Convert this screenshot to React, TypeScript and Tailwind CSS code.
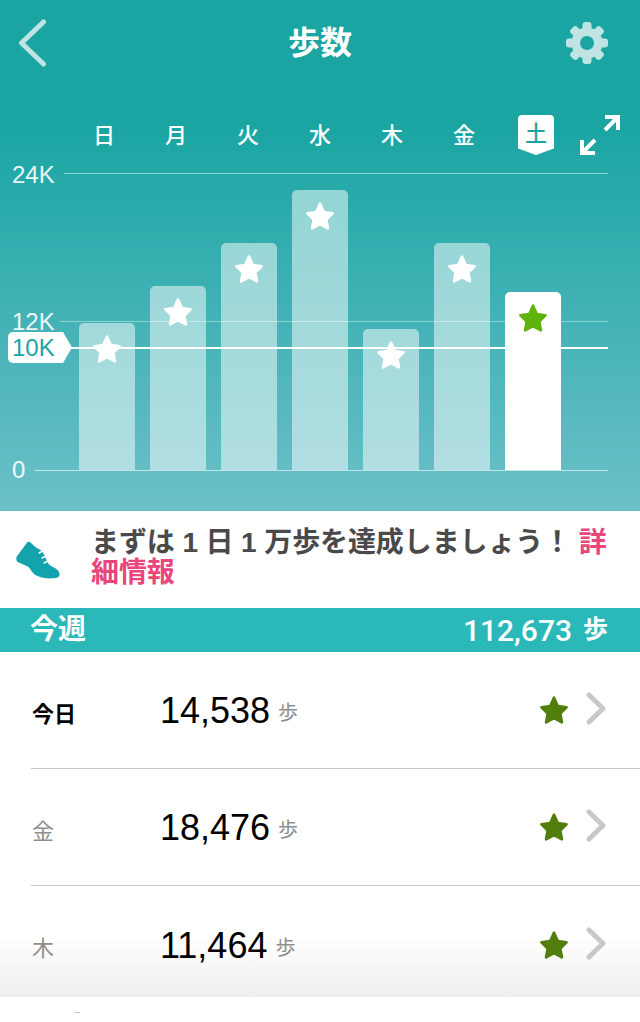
const FONT = "font-['Liberation_Sans','Noto_Sans_CJK_JP',sans-serif]";

const days = ['日', '月', '火', '水', '木', '金'];
const bars = [147, 184, 227, 280, 141, 227, 178];
const rows = [
  { day: '今日', steps: '14,538', today: true },
  { day: '金', steps: '18,476' },
  { day: '木', steps: '11,464' },
];

function Star({ size, color }: { size: number; color: string }) {
  return (
    <svg width={size} height={size} viewBox="0 0 24 24" fill={color} stroke={color} strokeWidth="2.200" strokeLinejoin="round">
      <polygon points="12,2.200 15,8.800 22,9.800 17,14.800 18.300,21.800 12,18.400 5.700,21.800 7,14.800 2,9.800 9,8.800" />
    </svg>
  );
}

function Gear() {
  return (
    <svg width="42" height="42" viewBox="0 0 42 42">
      <g fill="#c0e4e3">
        <circle cx="21" cy="21" r="15.500" />
        {[0, 45, 90, 135, 180, 225, 270, 315].map((a) => (
          <rect key={a} x="16.500" y="0" width="9" height="10" rx="3" transform={`rotate(${a} 21 21)`} />
        ))}
      </g>
      <circle cx="21" cy="21" r="7" fill="#1aa5a3" />
    </svg>
  );
}

function Shoe() {
  return (
    <svg width="44" height="39" viewBox="0 0 44 39" fill="#12a3ad">
      <path d="M0.500 16C4 11 8 6 11 1.500c1-1 2.500-1 4 .5 3 3 7 6 11 8l3 5c1 4 3 8 6 10 4 2 8 4 8.500 7.500.3 3-1 4-4 4.500-6 .8-13 .5-18-2-5-2-6-6-9-9-3-2-7-3-11-5-1-1-1.500-3-1-5z" />
      <g stroke="#fff" strokeWidth="1.500" strokeLinecap="round">
        <path d="M27 10l-4 2" />
        <path d="M30 15l-4 2" />
        <path d="M32 20l-4 2" />
      </g>
    </svg>
  );
}

export default function App() {
  return (
    <div className={`${FONT} relative h-[1022px] w-[640px] overflow-hidden bg-white`}>
      {/* Top chart panel */}
      <div className="h-[511px] bg-[linear-gradient(to_bottom,#1aa5a3_0%,#1aa5a3_25%,#6cc0c9_100%)]">
        <div className="flex h-[86px] items-center justify-between px-[18px]">
          <div className="w-[200px]">
            <svg width="30" height="48" viewBox="0 0 30 48" fill="none" stroke="#c0e4e3" strokeWidth="5" strokeLinecap="round" strokeLinejoin="round">
              <path d="M25.500 3L3.500 24l22 21" />
            </svg>
          </div>
          <h1 className="text-[32px] font-bold leading-none text-white">歩数</h1>
          <div className="flex w-[200px] justify-end pr-[14px]">
            <Gear />
          </div>
        </div>

        <div className="mt-[26px] flex h-[46px] items-center pl-[68px]">
          {days.map((d) => (
            <span key={d} className="w-[72px] text-center text-[22px] font-medium text-white">
              {d}
            </span>
          ))}
          <div className="ml-[18px] flex h-[40px] w-[36px] items-center justify-center rounded-t-[4px] bg-white pb-[3px] text-[22px] font-medium text-[#1aa5a3] [clip-path:polygon(0_0,100%_0,100%_84%,50%_100%,0_84%)]">
            土
          </div>
          <svg className="ml-[26px]" width="40" height="40" viewBox="0 0 40 40" fill="none" stroke="#fff" strokeWidth="4">
            <path d="M25 2h13v13M37 3L25 15" />
            <path d="M2 25v13h13M3 37l12-12" />
          </svg>
        </div>

        <div className="relative h-[353px]">
          {/* Grid lines and axis labels */}
          <div className="absolute left-[64px] top-[15px] h-px w-[544px] bg-white/50" />
          <div className="absolute left-[60px] top-[163px] h-px w-[548px] bg-white/40" />
          <div className="absolute left-[34px] top-[312px] h-px w-[574px] bg-white/60" />
          <span className="absolute left-[12px] top-[4px] text-[24px] leading-[26px] text-white/90">24K</span>
          <span className="absolute left-[12px] top-[151px] text-[24px] leading-[26px] text-white/90">12K</span>
          <span className="absolute left-[12px] top-[299px] text-[24px] leading-[26px] text-white/90">0</span>

          {/* Bars */}
          <div className="absolute bottom-[41px] left-[79px] flex items-end gap-[15px]">
            {bars.map((h, i) => (
              <div
                key={i}
                className={`flex w-[56px] justify-center rounded-t-[5px] ${i === 6 ? 'bg-white' : 'bg-white/50'}`}
                style={{ height: h }}
              >
                <div className="mt-[11px]">
                  <Star size={30} color={i === 6 ? '#5fb30c' : '#fff'} />
                </div>
              </div>
            ))}
          </div>

          {/* 10K goal line */}
          <div className="absolute left-[64px] top-[189px] h-[2px] w-[544px] bg-white" />
          <div className="absolute left-[8px] top-[174px] flex h-[31px] w-[64px] items-center rounded-l-[5px] bg-white pl-[4px] text-[24px] text-[#1aa5a3] [clip-path:polygon(0_0,86%_0,100%_50%,86%_100%,0_100%)]">
            10K
          </div>
        </div>
      </div>

      {/* Goal message */}
      <div className="flex h-[97px] items-center">
        <div className="ml-[16px] w-[75px] shrink-0 pt-[1px]">
          <Shoe />
        </div>
        <p className="mt-[-4px] w-[525px] text-[28px] font-bold leading-[30px] tracking-[-0.1px] text-[#4a4a4a]">
          まずは 1 日 1 万歩を達成しましょう！ <span className="text-[#e8467c]">詳細情報</span>
        </p>
      </div>

      {/* Week summary */}
      <div className="flex h-[44px] items-center justify-between bg-[#2ab8b9] pl-[30px] pr-[32px] text-white">
        <span className="text-[28px] font-bold">今週</span>
        <span className="flex items-center gap-[11px] font-['Roboto','Noto_Sans_CJK_JP',sans-serif]">
          <span className="text-[30px] font-medium">112,673</span>
          <span className="text-[25px] font-bold">歩</span>
        </span>
      </div>

      {/* Daily rows */}
      <div className="relative pl-[31px]">
        {/* Fade at the bottom of the scroll area */}
        <div className="absolute inset-x-0 top-[285px] h-[60px] bg-gradient-to-b from-white to-[#efefef]" />
        {rows.map((r, i) => (
          <div key={r.steps} className={`relative flex h-[117px] items-center ${i < 2 ? 'border-b border-[#c8c8c8]' : ''}`}>
            <span className={`w-[129px] pl-px pt-[8px] text-[22px] ${r.today ? 'font-bold text-black' : 'text-[#8e8e8e]'}`}>
              {r.day}
            </span>
            <span className="pt-[2px] text-[36px] leading-none text-black">{r.steps}</span>
            <span className="ml-[8px] pt-[6px] text-[20px] text-[#8e8e8e]">歩</span>
            <div className="ml-auto mr-[34px] flex items-center gap-[17px]">
              <Star size={30} color="#527f0c" />
              <svg className="-mt-[3px]" width="20" height="33" viewBox="0 0 20 33" fill="none" stroke="#c8c8c8" strokeWidth="5" strokeLinecap="round" strokeLinejoin="round">
                <path d="M3 3l14 13.500L3 30" />
              </svg>
            </div>
          </div>
        ))}
      </div>

      {/* Top edge of the next row, cut off by the tab bar */}
      <div className="absolute left-[74px] top-[1012px] h-px w-[6px] bg-[#c8c8c8]" />
    </div>
  );
}
